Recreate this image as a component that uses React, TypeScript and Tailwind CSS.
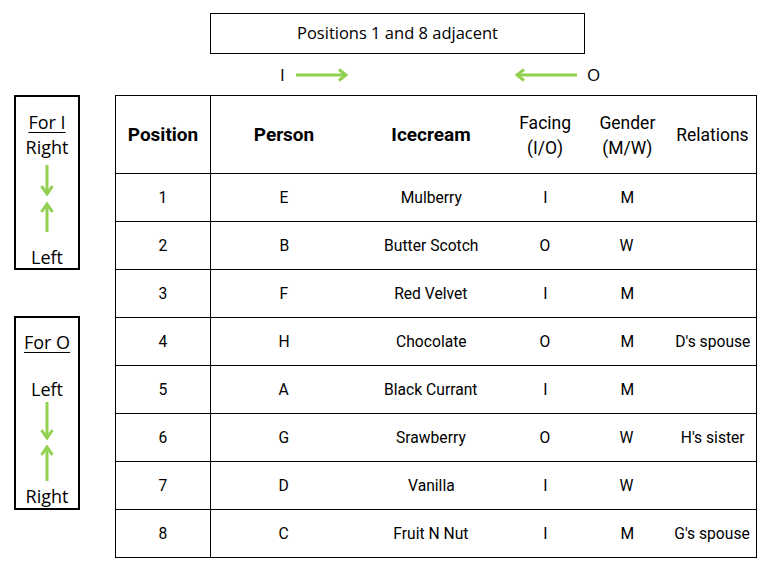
import React from "react";

const GREEN = "#92d050";

const HArrow = ({ dir, len }: { dir: "left" | "right"; len: number }) => (
  <svg width={len} height="14" viewBox={`0 0 ${len} 14`} className={dir === "left" ? "rotate-180" : ""}>
    <line x1="0" y1="7" x2={len - 3} y2="7" stroke={GREEN} strokeWidth="3" />
    <polyline points={`${len - 9},1.5 ${len - 2},7 ${len - 9},12.5`} fill="none" stroke={GREEN} strokeWidth="3" />
  </svg>
);

const VArrow = ({ dir, len }: { dir: "up" | "down"; len: number }) => (
  <svg width="14" height={len} viewBox={`0 0 14 ${len}`} className={dir === "up" ? "rotate-180" : ""}>
    <line x1="7" y1="0" x2="7" y2={len - 2} stroke={GREEN} strokeWidth="3" />
    <polyline points={`1.5,${len - 10} 7,${len - 2} 12.5,${len - 10}`} fill="none" stroke={GREEN} strokeWidth="3" />
  </svg>
);

const rows = [
  ["1", "E", "Mulberry", "I", "M", ""],
  ["2", "B", "Butter Scotch", "O", "W", ""],
  ["3", "F", "Red Velvet", "I", "M", ""],
  ["4", "H", "Chocolate", "O", "M", "D's spouse"],
  ["5", "A", "Black Currant", "I", "M", ""],
  ["6", "G", "Srawberry", "O", "W", "H's sister"],
  ["7", "D", "Vanilla", "I", "W", ""],
  ["8", "C", "Fruit N Nut", "I", "M", "G's spouse"],
];

const Cell = ({ children }: { children: React.ReactNode }) => (
  <span className="inline-block scale-x-[0.92] whitespace-nowrap">{children}</span>
);

export default function App() {
  return (
    <div className="w-[778px] h-[579px] bg-white text-black overflow-hidden">
      {/* top: adjacency note and direction arrows */}
      <div className="pt-[13px] font-['Open_Sans',sans-serif]">
        <div className="ml-[210px] w-[375px] h-[41px] border border-black flex items-center justify-center text-[16.5px]">
          Positions 1 and 8 adjacent
        </div>
        <div className="flex items-center h-[41px]">
          <span className="ml-[280px] w-[16px] text-[17px]">I</span>
          <HArrow dir="right" len={52} />
          <div className="w-[167px]" />
          <HArrow dir="left" len={62} />
          <span className="ml-[10px] text-[17px]">O</span>
        </div>
      </div>

      <div className="flex">
        {/* legends */}
        <div className="ml-[14px] w-[66px] flex flex-col font-['Open_Sans',sans-serif] text-[18px] leading-[22px]">
          <div className="h-[175px] border-2 border-black flex flex-col items-center pt-[14px]">
            <span className="underline underline-offset-[3px]">For I</span>
            <span className="mt-[3px]">Right</span>
            <div className="mt-[7px] flex"><VArrow dir="down" len={31} /></div>
            <div className="mt-[6px] flex"><VArrow dir="up" len={30} /></div>
            <span className="mt-[14px]">Left</span>
          </div>
          <div className="mt-[46px] h-[194px] border-2 border-black flex flex-col items-center pt-[13px]">
            <span className="underline underline-offset-[3px]">For O</span>
            <span className="mt-[25px]">Left</span>
            <div className="mt-[2px] flex"><VArrow dir="down" len={38} /></div>
            <div className="mt-[5px] flex"><VArrow dir="up" len={36} /></div>
            <span className="mt-[4px]">Right</span>
          </div>
        </div>

        {/* table */}
        <div className="ml-[35px] w-[642px] border border-black font-['Roboto',sans-serif]">
          <div className="grid grid-cols-[95px_146px_148px_80px_84px_87px] h-[78px] border-b border-black items-center text-center text-[19px] leading-[25px]">
            <div className="h-full flex items-center justify-center border-r border-black font-bold">Position</div>
            <div className="font-bold">Person</div>
            <div className="font-bold">Icecream</div>
            <div><Cell>Facing<br />(I/O)</Cell></div>
            <div><Cell>Gender<br />(M/W)</Cell></div>
            <div><Cell>Relations</Cell></div>
          </div>
          {rows.map((r, i) => (
            <div
              key={r[0]}
              className={
                i === rows.length - 1
                  ? "grid grid-cols-[95px_146px_148px_80px_84px_87px] h-[47px] items-center text-center text-[17px]"
                  : "grid grid-cols-[95px_146px_148px_80px_84px_87px] h-[48px] border-b border-black items-center text-center text-[17px]"
              }
            >
              <div className="h-full flex items-center justify-center border-r border-black"><Cell>{r[0]}</Cell></div>
              <div><Cell>{r[1]}</Cell></div>
              <div><Cell>{r[2]}</Cell></div>
              <div><Cell>{r[3]}</Cell></div>
              <div><Cell>{r[4]}</Cell></div>
              <div><Cell>{r[5]}</Cell></div>
            </div>
          ))}
        </div>
      </div>
    </div>
  );
}
